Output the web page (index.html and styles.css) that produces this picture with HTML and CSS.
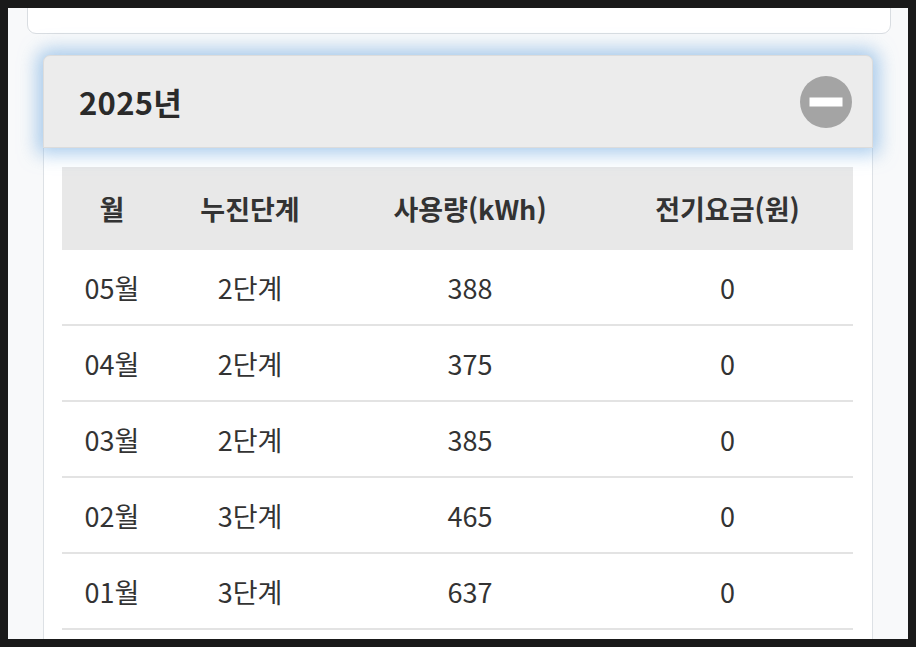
FILE: index.html
```html
<!DOCTYPE html>
<html lang="ko">
<head>
<meta charset="utf-8">
<link rel="stylesheet" href="styles.css">
</head>
<body>
<div class="frame">
  <div class="screen">
    <div class="top-card"></div>
    <section class="year">
      <div class="year-head">
        <h2 class="year-title">2025년</h2>
        <svg class="toggle" width="52" height="52" viewBox="0 0 52 52" aria-hidden="true">
          <circle cx="26" cy="26" r="26" fill="#a4a4a4"/>
          <rect x="9.5" y="21.5" width="33" height="9" fill="#ffffff"/>
        </svg>
      </div>
      <div class="year-body">
        <table class="usage">
          <colgroup>
            <col class="c1"><col class="c2"><col class="c3"><col class="c4">
          </colgroup>
          <thead>
            <tr><th>월</th><th>누진단계</th><th>사용량(kWh)</th><th>전기요금(원)</th></tr>
          </thead>
          <tbody>
            <tr><td>05월</td><td>2단계</td><td>388</td><td>0</td></tr>
            <tr><td>04월</td><td>2단계</td><td>375</td><td>0</td></tr>
            <tr><td>03월</td><td>2단계</td><td>385</td><td>0</td></tr>
            <tr><td>02월</td><td>3단계</td><td>465</td><td>0</td></tr>
            <tr><td>01월</td><td>3단계</td><td>637</td><td>0</td></tr>
          </tbody>
        </table>
      </div>
    </section>
  </div>
</div>
</body>
</html>
```
FILE: styles.css
```css
html, body {
  margin: 0;
  padding: 0;
  background: #1a1a1a;
}
body {
  font-family: "Noto Sans CJK KR", "Noto Sans", sans-serif;
  color: #333333;
}
.frame {
  padding: 8px;
  height: 631px;
}
.screen {
  width: 900px;
  height: 631px;
  background: #f8f9fa;
  overflow: hidden;
}
.top-card {
  margin: -20px 17px 0 19px;
  height: 44px;
  background: #ffffff;
  border: 1px solid #d9dde1;
  border-radius: 0 0 9px 9px;
}
.year {
  margin: 21px 35px 0 35px;
}
.year-head {
  position: relative;
  z-index: 2;
  height: 93px;
  box-sizing: border-box;
  display: flex;
  align-items: center;
  justify-content: space-between;
  padding: 0 20px 0 35px;
  background: #ececec;
  border: 1px solid #dcdcdc;
  border-radius: 7px 7px 0 0;
  box-shadow: 0 0 18px 6px rgba(115, 172, 225, 0.6);
}
.year-title {
  margin: 0;
  font-size: 31px;
  font-weight: 700;
  color: #2a2a2a;
  letter-spacing: 0.3px;
}
.toggle {
  display: block;
}
.year-body {
  position: relative;
  z-index: 1;
  background: #ffffff;
  border-left: 1px solid #dde1e5;
  border-right: 1px solid #dde1e5;
  padding: 19px 19px 0 18px;
  height: 500px;
}
.usage {
  width: 791px;
  border-collapse: collapse;
  table-layout: fixed;
}
.c1 { width: 100px; }
.c2 { width: 176px; }
.c3 { width: 264px; }
.c4 { width: 251px; }
.usage th {
  height: 83px;
  padding: 0;
  background: #e8e8e8;
  font-size: 27px;
  font-weight: 700;
  color: #333333;
  text-align: center;
}
.usage td {
  height: 74px;
  padding: 0;
  font-size: 27px;
  font-weight: 400;
  color: #333333;
  text-align: center;
  border-bottom: 2px solid #e3e3e3;
}
```
